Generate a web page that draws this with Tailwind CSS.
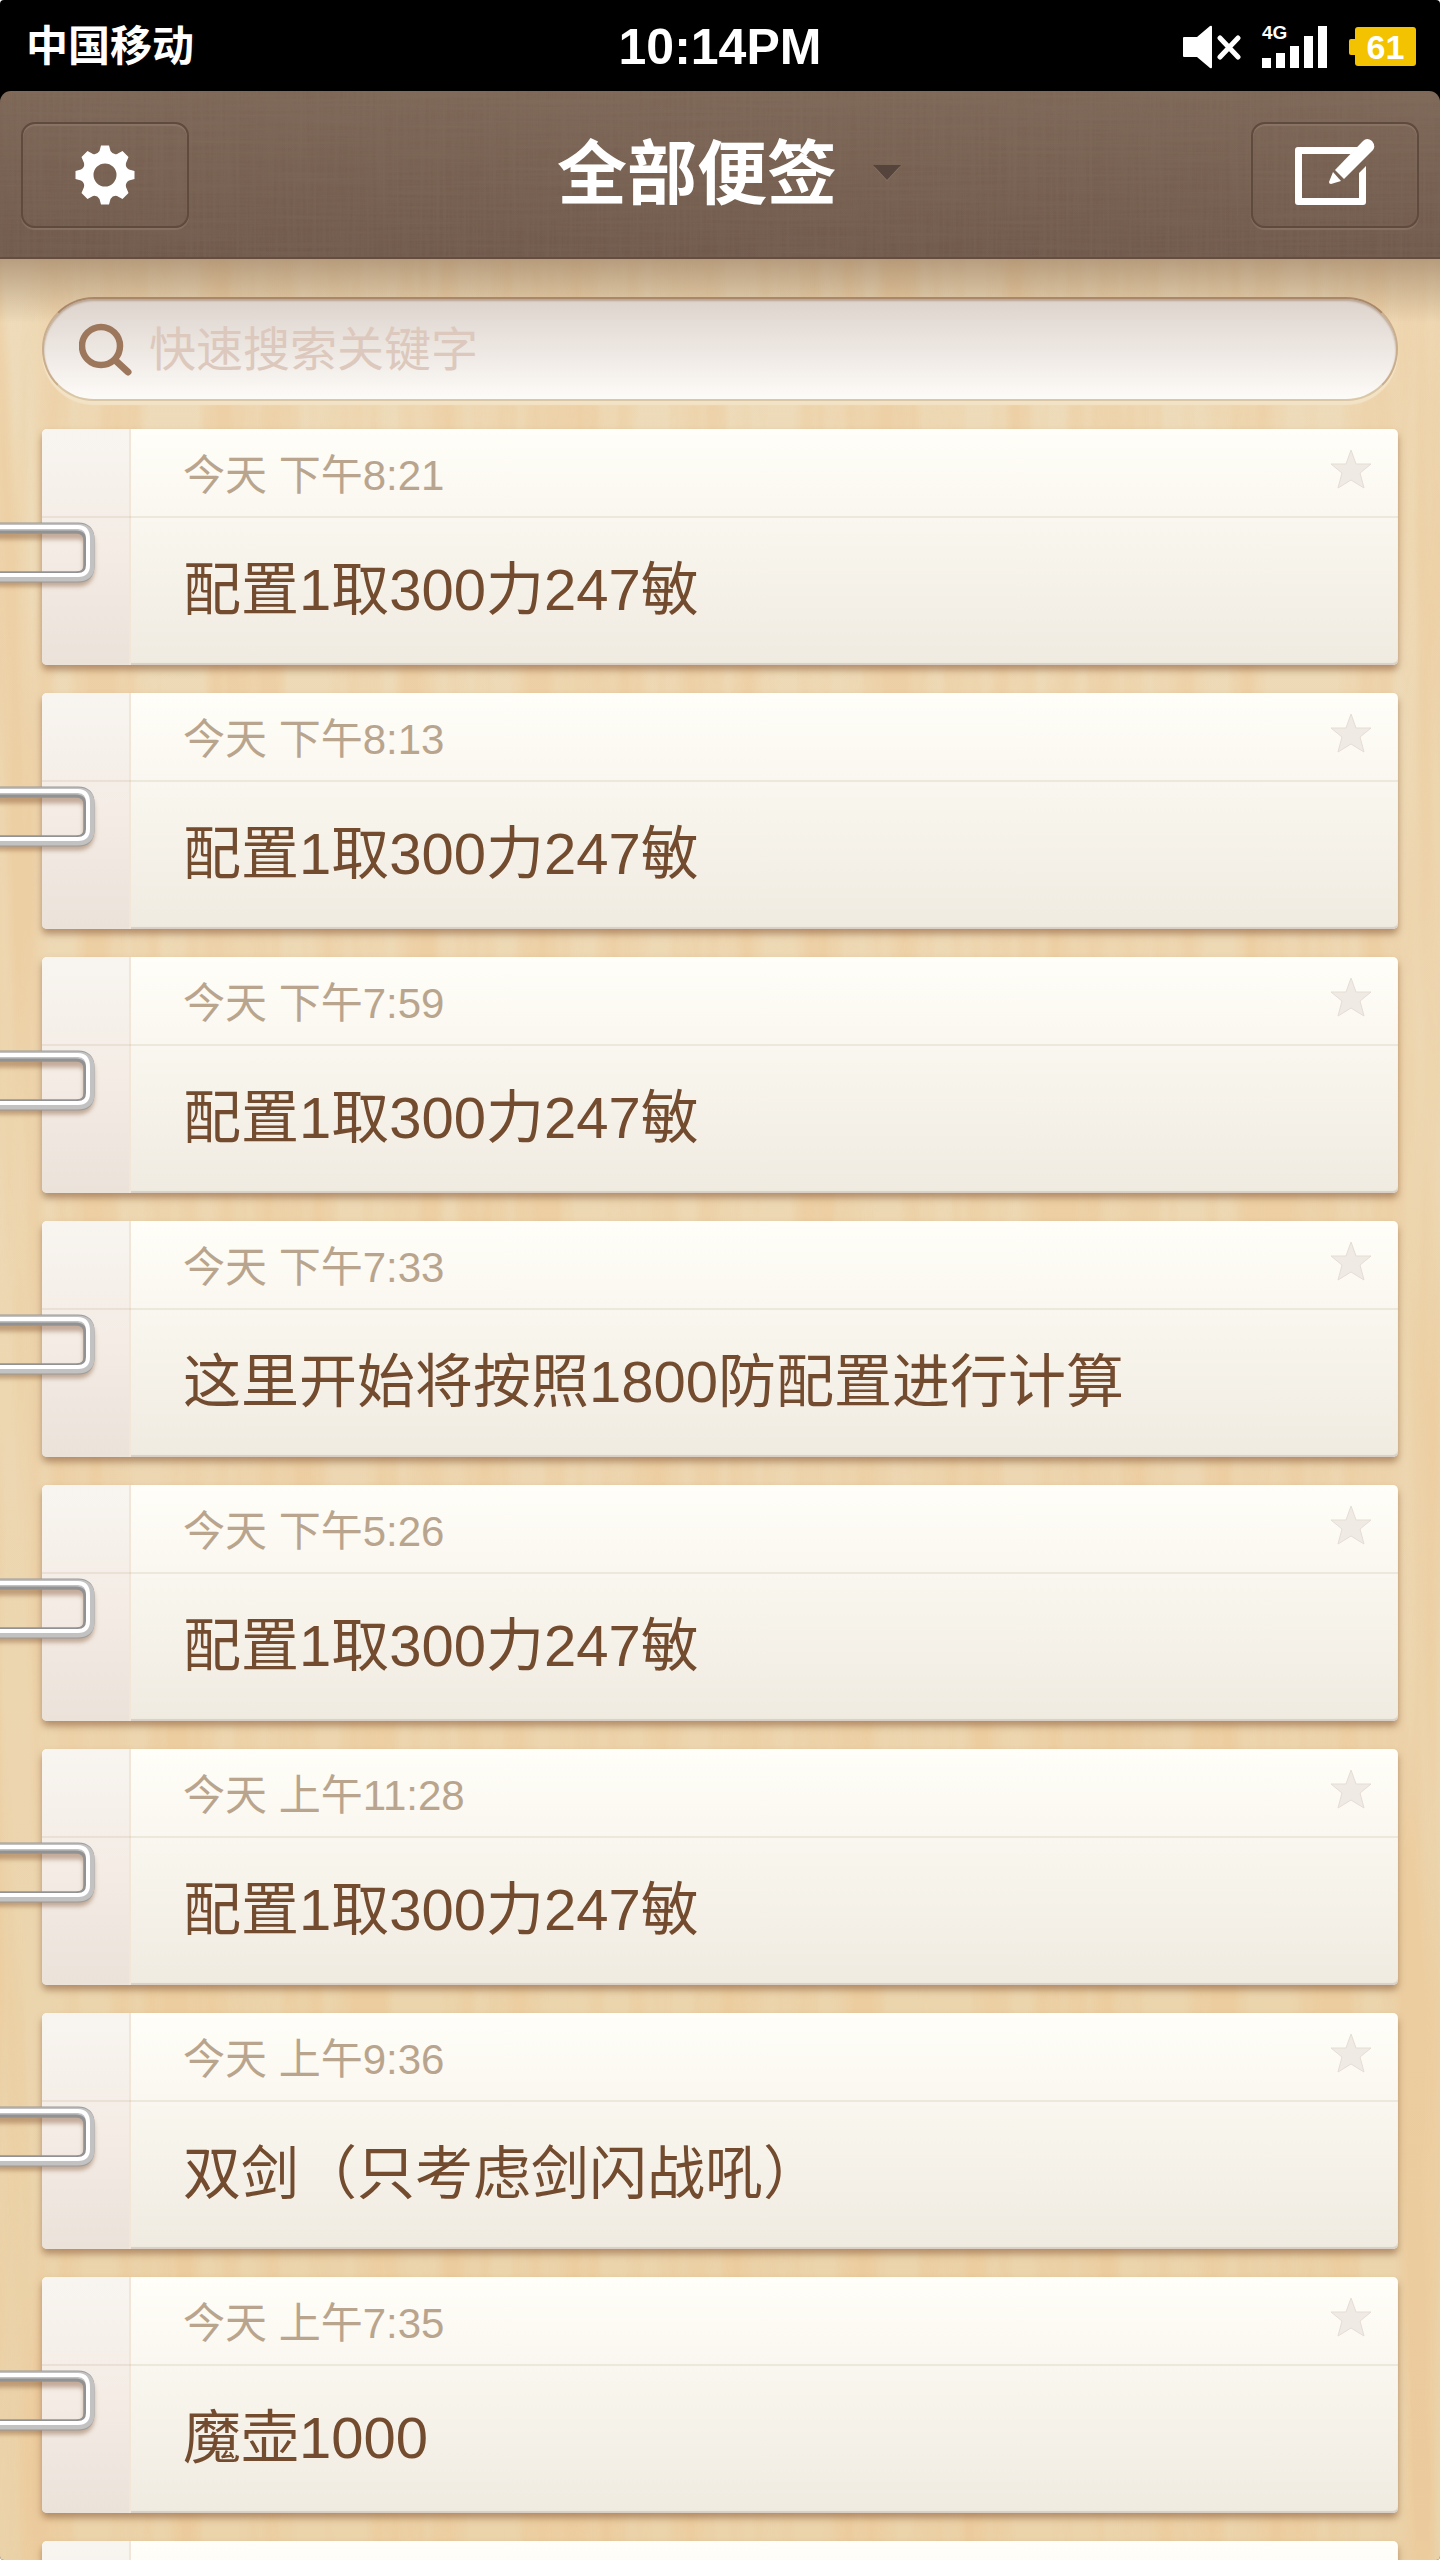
<!DOCTYPE html>
<html lang="zh-CN">
<head>
    <meta charset="UTF-8">
    <meta name="viewport" content="width=device-width, initial-scale=1.0">
    <title>全部便签</title>
    <script src="https://cdn.jsdelivr.net/npm/@tailwindcss/browser@4"></script>
</head>
<body class="bg-white font-['Liberation_Sans','Noto_Sans_CJK_SC',sans-serif]">

    <div class="h-screen flex flex-col bg-black rounded-[4px] overflow-hidden">
        <!-- status bar -->
        <div class="h-[91px] shrink-0 grid grid-cols-3 items-center px-[24px] pt-[2px] text-white">
            <span class="pl-[2px] text-[42px] leading-[48px] font-bold">中国移动</span>
            <span class="text-center text-[50px] leading-[48px] font-bold">10:14PM</span>
            <div class="flex items-center justify-end">
                <svg class="w-[58px] h-[44px] mr-[21px]" viewBox="0 0 58 44" fill="#fff" role="img" aria-label="静音">
                    <path d="M1 12h13L27 1q2-1 2 1v40q0 2-2 1L14 32H1q-1 0-1-1V13q0-1 1-1z"/>
                    <path d="M37 13l18 19M55 13L37 32" stroke="#fff" stroke-width="5" stroke-linecap="round"/>
                </svg>
                <div class="relative w-[65px] h-[44px] mr-[22px]">
                    <span class="absolute left-0 top-0 text-[19px] leading-[16px] font-bold">4G</span>
                    <svg class="w-[65px] h-[44px]" viewBox="0 0 65 44" fill="#fff" role="img" aria-label="信号">
                        <path d="M0 33h9v10H0zM14 28h9v15h-9zM28 21h9v22h-9zM42 11h9v32h-9zM56 1h9v42h-9z"/>
                    </svg>
                </div>
                <div class="flex items-center">
                    <span class="w-[6px] h-[16px] bg-[#f3c200] rounded-l-[2px]"></span>
                    <span class="w-[61px] h-[39px] bg-[#f3c200] rounded-[3px] text-center text-[34px] leading-[40px] font-bold">61</span>
                </div>
            </div>
        </div>

        <!-- header -->
        <header class="relative z-10 h-[168px] shrink-0 flex items-center justify-between px-[21px] pt-[2px] rounded-t-[11px] overflow-hidden bg-linear-to-b from-[#7e6757] to-[#715a4c] border-b-2 border-[#644c3e]">
            <svg class="absolute inset-0 w-full h-full opacity-15" aria-hidden="true">
                <filter id="linen-h"><feTurbulence type="fractalNoise" baseFrequency="0.008 0.3" numOctaves="3" seed="4"/><feColorMatrix values="0 0 0 0 0.3  0 0 0 0 0.25  0 0 0 0 0.2  1.6 0 0 0 -0.5"/></filter>
                <filter id="linen-v"><feTurbulence type="fractalNoise" baseFrequency="0.3 0.008" numOctaves="3" seed="9"/><feColorMatrix values="0 0 0 0 0.3  0 0 0 0 0.25  0 0 0 0 0.2  1.6 0 0 0 -0.5"/></filter>
                <rect width="100%" height="100%" filter="url(#linen-h)"/>
                <rect width="100%" height="100%" filter="url(#linen-v)"/>
            </svg>
            <button class="relative w-[168px] h-[106px] flex items-center justify-center rounded-[14px] border-2 border-[#5f4a3e] shadow-[inset_0_2px_1px_#8a7465,0_2px_1px_#857061]" aria-label="设置">
                <svg class="w-[60px] h-[60px]" viewBox="-30 -30 60 60" fill="#fff">
                    <path fill-rule="evenodd" d="M-4-29.500H4L5.500-24Q8-20 12-21L17.500-24L23.500-18L21-12Q20-8 24-5.500L29.500-4V4L24 5.500Q20 8 21 12L23.500 18L17.500 24L12 21Q8 20 5.500 24L4 29.500H-4L-5.500 24Q-8 20-12 21L-17.500 24L-23.500 18L-21 12Q-20 8-24 5.500L-29.500 4V-4L-24-5.500Q-20-8-21-12L-23.500-18L-17.500-24L-12-21Q-8-20-5.500-24ZM0-11.500A11.500 11.500 0 1 0 0 11.500A11.500 11.500 0 1 0 0-11.500Z"/>
                </svg>
            </button>
            <button class="relative flex items-center gap-[36px] pl-[18px] text-white">
                <span class="text-[70px] leading-[96px] font-bold">全部便签</span>
                <svg class="w-[28px] h-[17px] mb-[4px]" viewBox="0 0 28 17"><path d="M1 2H27L14 16z" fill="#8a7667"/><path d="M0 0H28L14 15z" fill="#54443b"/></svg>
            </button>
            <button class="relative w-[168px] h-[106px] flex items-center justify-center rounded-[14px] border-2 border-[#5f4a3e] shadow-[inset_0_2px_1px_#8a7465,0_2px_1px_#857061]" aria-label="新建便签">
                <svg class="w-[80px] h-[76px]" viewBox="0 3 80 76" fill="#fff">
                    <path d="M3 13H63L56 20H7V64H64V39L71 32V68Q71 71 68 71H3Q0 71 0 68V16Q0 13 3 13z"/>
                    <path d="M40 36L68 7Q72 3 77 7Q81 12 78 16L49 45z"/>
                    <path d="M38 38L46 47L36 50Q34 50 34 48z"/>
                </svg>
            </button>
        </header>

        <!-- notes -->
        <main class="relative flex-1 min-h-0 overflow-hidden px-[42px] pt-[38px] bg-linear-to-b from-[#eedbb9] to-[#ebd3aa]">
            <svg class="absolute inset-0 w-full h-full opacity-35" aria-hidden="true">
                <filter id="wood" x="0" y="0" width="100%" height="100%" color-interpolation-filters="sRGB">
                    <feTurbulence type="fractalNoise" baseFrequency="0.025 0.0015" numOctaves="3" seed="12"/>
                    <feColorMatrix values="0 0 0 0 0.93  0 0 0 0 0.75  0 0 0 0 0.53  3 0 0 0 -1.1"/>
                </filter>
                <rect width="100%" height="100%" filter="url(#wood)"/>
            </svg>
            <div class="absolute inset-x-0 top-0 h-[64px] bg-linear-to-b from-[#8a6c50]/55 to-[#8a6c50]/0"></div>

            <label class="relative flex items-center gap-[16px] h-[104px] px-[35px] rounded-full border-2 border-t-[#a98768] border-x-[#c9ad8c] border-b-[#dac7a8] bg-linear-to-b from-[#ddd3cc] to-[#fdfbf8] shadow-[inset_0_2px_2px_#b9a594,0_4px_1px_#f3e3c6]">
                <svg class="w-[54px] h-[54px] shrink-0" viewBox="0 -2 54 54" fill="none" stroke="#9d775c" aria-hidden="true">
                    <circle cx="22" cy="22" r="19" stroke-width="6.500"/>
                    <path d="M36 36L49 48" stroke-width="7" stroke-linecap="round"/>
                </svg>
                <input type="search" placeholder="快速搜索关键字" aria-label="快速搜索关键字" class="flex-1 min-w-0 pt-[2px] bg-transparent outline-none text-[47px] leading-[64px] text-[#6f4a30] placeholder:text-[#dcc8bc]">
            </label>

            <ul id="notes" class="relative mt-[28px] flex flex-col gap-[28px]"></ul>
        </main>
    </div>

    <script>
        const notes = [
            { date: "今天 下午8:21", text: "配置1取300力247敏" },
            { date: "今天 下午8:13", text: "配置1取300力247敏" },
            { date: "今天 下午7:59", text: "配置1取300力247敏" },
            { date: "今天 下午7:33", text: "这里开始将按照1800防配置进行计算" },
            { date: "今天 下午5:26", text: "配置1取300力247敏" },
            { date: "今天 上午11:28", text: "配置1取300力247敏" },
            { date: "今天 上午9:36", text: "双剑（只考虑剑闪战吼）" },
            { date: "今天 上午7:35", text: "魔壶1000" },
            { date: "", text: "" },
        ];

        // paper clip: same path drawn from dark edge to bright middle
        const clip = `
            <svg class="absolute -left-[42px] top-[92px] w-[104px] h-[76px]" viewBox="0 0 104 76" fill="none" aria-hidden="true">
                <path d="M-10 13H78Q89 13 89 24V48Q89 60 78 60H-10" stroke="#7a4a28" stroke-opacity=".4" stroke-width="11" class="blur-[2px]"/>
                <path d="M-10 7H78Q89 7 89 18V45Q89 56 78 56H-10" stroke="#9a9a9a" stroke-width="11"/>
                <path d="M-10 7H78Q90 7 90 18V45Q90 56 78 56H-10" stroke="#c2c2c2" stroke-width="9"/>
                <path d="M-10 11H76Q85 11 85 20V44Q85 52 76 52H-10" stroke="#929292" stroke-width="3"/>
                <path d="M-10 6H78Q88 6 88 18V44Q88 54 78 54H-10" stroke="#fff" stroke-width="4"/>
            </svg>`;

        document.getElementById("notes").innerHTML = notes.map(note => `
            <li class="relative h-[236px] flex rounded-[5px] bg-linear-to-b from-[#fffef8] to-[#f0ebe1] shadow-[0_5px_7px_#8c5f3c99,inset_0_-2px_1px_#d9cfc4]">
                <div class="w-[89px] shrink-0 rounded-l-[5px] border-r-2 border-[#f2e6d8] bg-linear-to-b from-[#f8f5f0] via-[#f4ece5] to-[#ebe2da]"></div>
                <div class="flex-1 min-w-0 pl-[52px] pr-[26px]">
                    <div class="h-[88px] flex items-center justify-between">
                        <time class="pt-[6px] text-[42px] leading-[60px] text-[#b9a58e]">${note.date}</time>
                        <button class="pb-[8px]" aria-label="收藏">
                            <svg class="w-[42px] h-[40px]" viewBox="0 0 42 40"><path d="M21 1L26 15H41L30 24L34 39L21 31L8 39L12 24L1 15H16z" fill="#f0eae5" stroke="#e5ddd6"/></svg>
                        </button>
                    </div>
                    <p class="pt-[31px] text-[58px] leading-[84px] text-[#734b2f] whitespace-nowrap">${note.text}</p>
                </div>
                <div class="absolute inset-x-0 top-[87px] h-[2px] bg-[#a07850]/12"></div>
                ${clip}
            </li>`).join("");
    </script>
</body>
</html>
